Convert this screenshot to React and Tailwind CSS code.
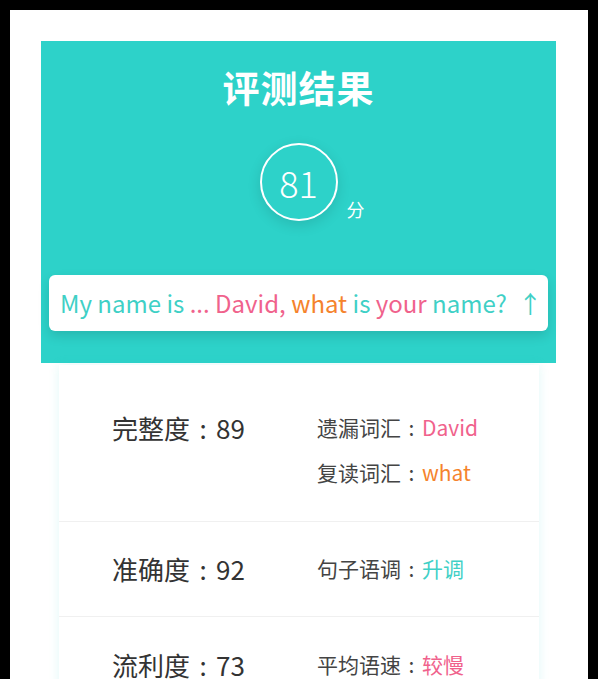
import React from "react";

const FONT = { fontFamily: '"Noto Sans CJK SC", "Noto Sans", sans-serif' };

const ROWS = [
  {
    label: "完整度",
    score: 89,
    pad: "pt-[40px] pb-[26px]",
    items: [
      { name: "遗漏词汇", value: "David", color: "text-[#f0628c]" },
      { name: "复读词汇", value: "what", color: "text-[#f5832c]" },
    ],
  },
  {
    label: "准确度",
    score: 92,
    pad: "pt-[24px] pb-[25px]",
    items: [{ name: "句子语调", value: "升调", color: "text-[#3fd0c6]" }],
  },
  {
    label: "流利度",
    score: 73,
    pad: "pt-[25px] pb-[25px]",
    items: [{ name: "平均语速", value: "较慢", color: "text-[#f0628c]" }],
  },
];

const SENTENCE = [
  { w: "My name is", c: "text-[#3fd0c6]" },
  { w: "...", c: "text-[#f0628c]" },
  { w: "David,", c: "text-[#f0628c]" },
  { w: "what", c: "text-[#f5832c]" },
  { w: "is", c: "text-[#3fd0c6]" },
  { w: "your", c: "text-[#f0628c]" },
  { w: "name?", c: "text-[#3fd0c6]" },
];

function Colon() {
  return <span className="inline-block w-[1em] text-center">:</span>;
}

export default function App() {
  return (
    <div className="min-h-screen bg-black px-[10px] pt-[10px]" style={FONT}>
      <div className="min-h-[669px] bg-white pt-[31px]">
        <div className="ml-[31px] mr-[32px] flex h-[322px] flex-col items-center bg-[#2dd2c9] px-[8px] pt-[25px]">
          <h1 className="text-[37px] font-bold leading-[43px] tracking-[1px] text-white">
            评测结果
          </h1>
          <div className="relative mt-[34px]">
            <div className="flex h-[78px] w-[78px] items-center justify-center rounded-full border-2 border-white shadow-[0_4px_14px_rgba(0,0,0,0.12)]">
              <span className="text-[36px] font-light leading-none text-white">81</span>
            </div>
            <span className="absolute left-[87px] top-[57px] text-[18px] leading-none text-white">
              分
            </span>
          </div>
          <div className="mt-[54px] flex h-[56px] w-full items-center rounded-[6px] bg-white pl-[11px] shadow-[0_5px_12px_rgba(0,0,0,0.13)]">
            <p className="text-[24px] leading-none whitespace-nowrap">
              {SENTENCE.map((s, i) => (
                <span key={i} className={s.c}>
                  {s.w}{" "}
                </span>
              ))}
              <span className="ml-[6px] text-[#3fd0c6]">↑</span>
            </p>
          </div>
        </div>

        <div className="mx-[49px] mt-[2px] bg-white shadow-[0_0_10px_rgba(45,210,201,0.14)]">
          {ROWS.map((r, i) => (
            <div
              key={r.label}
              className={
                "flex items-start " + r.pad + (i > 0 ? " border-t border-[#f0f0f0]" : "")
              }
            >
              <div className="w-[258px] pl-[53px] text-[26px] leading-[45px] text-[#333]">
                {r.label}
                <Colon />
                {r.score}
              </div>
              <div className="flex flex-col">
                {r.items.map((it) => (
                  <div key={it.name} className="text-[21px] leading-[45px] text-[#444]">
                    {it.name}
                    <Colon />
                    <span className={it.color}>{it.value}</span>
                  </div>
                ))}
              </div>
            </div>
          ))}
        </div>
      </div>
    </div>
  );
}
